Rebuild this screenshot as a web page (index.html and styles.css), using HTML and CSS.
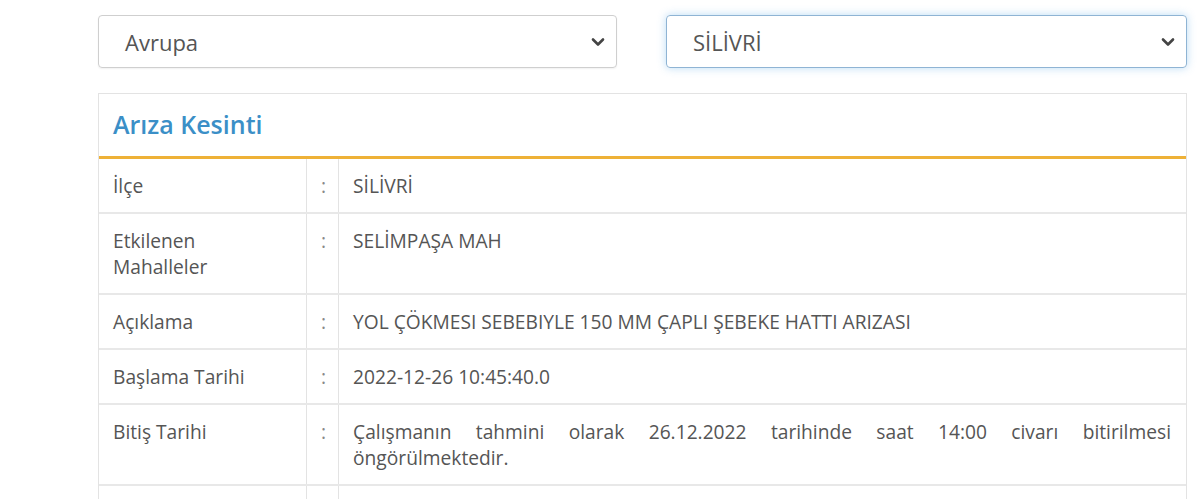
FILE: index.html
```html
<!DOCTYPE html>
<html lang="tr">
<head>
<meta charset="utf-8">
<link rel="stylesheet" href="styles.css">
</head>
<body>
<div class="page">
  <div class="filters">
    <div class="select">
      <span class="select-text">Avrupa</span>
      <svg class="chev" width="14" height="10" viewBox="0 0 14 10"><path d="M2 2.5 L7 7.5 L12 2.5" fill="none" stroke="#444" stroke-width="2.6" stroke-linecap="round" stroke-linejoin="round"/></svg>
    </div>
    <div class="select focus">
      <span class="select-text">SİLİVRİ</span>
      <svg class="chev" width="14" height="10" viewBox="0 0 14 10"><path d="M2 2.5 L7 7.5 L12 2.5" fill="none" stroke="#444" stroke-width="2.6" stroke-linecap="round" stroke-linejoin="round"/></svg>
    </div>
  </div>
  <div class="panel">
    <div class="panel-head">Arıza Kesinti</div>
    <table class="info">
      <tr><td class="lbl">İlçe</td><td class="sep">:</td><td class="val">SİLİVRİ</td></tr>
      <tr><td class="lbl">Etkilenen Mahalleler</td><td class="sep">:</td><td class="val">SELİMPAŞA MAH</td></tr>
      <tr><td class="lbl">Açıklama</td><td class="sep">:</td><td class="val">YOL ÇÖKMESI SEBEBIYLE 150 MM ÇAPLI ŞEBEKE HATTI ARIZASI</td></tr>
      <tr><td class="lbl">Başlama Tarihi</td><td class="sep">:</td><td class="val">2022-12-26 10:45:40.0</td></tr>
      <tr><td class="lbl">Bitiş Tarihi</td><td class="sep">:</td><td class="val">Çalışmanın tahmini olarak 26.12.2022 tarihinde saat 14:00 civarı bitirilmesi öngörülmektedir.</td></tr>
      <tr><td class="lbl">&nbsp;</td><td class="sep">&nbsp;</td><td class="val">&nbsp;</td></tr>
    </table>
  </div>
</div>
</body>
</html>
```

FILE: styles.css
```css
html, body {
  margin: 0;
  padding: 0;
  background: #fff;
}
body {
  font-family: "Open Sans", "Noto Sans", sans-serif;
  color: #555;
}
.page {
  width: 1089px;
  margin-left: 98px;
  padding-top: 15px;
}
.filters {
  display: grid;
  grid-template-columns: 519px 521px;
  column-gap: 49px;
}
.select {
  height: 53px;
  box-sizing: border-box;
  border: 1px solid #cfcfcf;
  border-radius: 4px;
  display: flex;
  align-items: center;
  justify-content: space-between;
  padding: 0 11px 0 26px;
  box-shadow: 0 1px 2px rgba(0,0,0,0.06);
}
.select.focus {
  border-color: #8fb4d4;
  box-shadow: 0 0 8px rgba(102,175,233,0.45);
  padding-left: 26px;
}
.select-text {
  font-size: 22px;
  color: #555;
}
.chev {
  display: block;
}
.panel {
  margin-top: 25px;
  border: 1px solid #e3e3e3;
  border-bottom: none;
}
.panel-head {
  height: 65px;
  box-sizing: border-box;
  padding: 0 14px 2px;
  display: flex;
  align-items: center;
  font-size: 25px;
  font-weight: 600;
  color: #3b8fc7;
  border-bottom: 3px solid #eeb137;
}
.info {
  width: 100%;
  border-collapse: collapse;
  font-size: 19.2px;
  line-height: 26px;
}
.info td {
  vertical-align: top;
  border-top: 2px solid #e8e8e8;
  padding: 14px 15px 13px 14px;
}
.info tr:first-child td {
  border-top: none;
}
.info td.lbl {
  width: 178px;
  border-right: 1px solid #e3e3e3;
}
.info td.sep {
  width: 1px;
  padding: 14px 12px 13px 14px;
  border-right: 1px solid #e3e3e3;
  color: #888;
}
.info td.val {
  text-align: justify;
}
```
